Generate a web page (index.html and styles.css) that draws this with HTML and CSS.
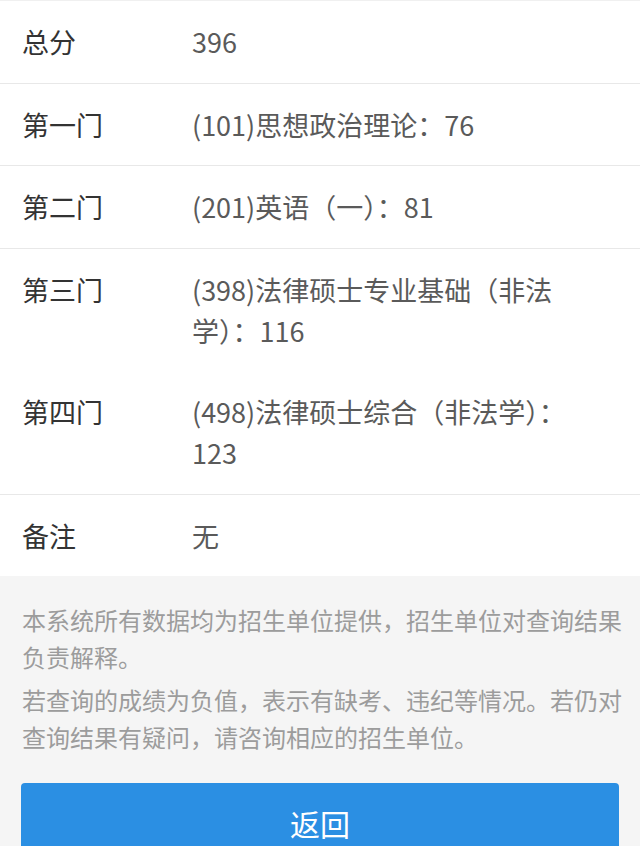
FILE: index.html
```html
<!DOCTYPE html>
<html lang="zh-CN">
<head>
    <meta charset="UTF-8">
    <meta name="viewport" content="width=device-width, initial-scale=1.0">
    <title>成绩查询结果</title>
    <link rel="stylesheet" href="styles.css">
</head>
<body>
    <div class="score-list">
        <div class="score-row">
            <div class="score-label">总分</div>
            <div class="score-value">396</div>
        </div>
        <div class="score-row">
            <div class="score-label">第一门</div>
            <div class="score-value">(101)思想政治理论：76</div>
        </div>
        <div class="score-row">
            <div class="score-label">第二门</div>
            <div class="score-value">(201)英语（一）：81</div>
        </div>
        <div class="score-row no-line">
            <div class="score-label">第三门</div>
            <div class="score-value">(398)法律硕士专业基础（非法学）：116</div>
        </div>
        <div class="score-row">
            <div class="score-label">第四门</div>
            <div class="score-value">(498)法律硕士综合（非法学）：123</div>
        </div>
        <div class="score-row no-line">
            <div class="score-label">备注</div>
            <div class="score-value">无</div>
        </div>
    </div>

    <div class="notice">
        <p>本系统所有数据均为招生单位提供，招生单位对查询结果负责解释。</p>
        <p>若查询的成绩为负值，表示有缺考、违纪等情况。若仍对查询结果有疑问，请咨询相应的招生单位。</p>
        <button class="back-btn">返回</button>
    </div>
</body>
</html>
```

FILE: styles.css
```css
body {
    font-family: "Noto Sans CJK SC", "Noto Sans", sans-serif;
    background-color: #f5f5f5;
    margin: 0;
    padding: 0;
}
.score-list {
    background: #fff;
    border-top: 1px solid #f0f0f0;
}
.score-row {
    display: flex;
    padding: 20.25px 0;
    border-bottom: 1px solid #e8e8e8;
    font-size: 27px;
    line-height: 41px;
}
.score-row.no-line {
    border-bottom: none;
}
.score-label {
    width: 192px;
    flex-shrink: 0;
    padding-left: 22px;
    box-sizing: border-box;
    color: #333;
}
.score-value {
    flex: 1;
    padding-right: 42px;
    color: #5a5a5a;
}
.notice {
    padding: 25px 16px 0 21px;
}
.notice p {
    margin: 0 0 6px 1px;
    font-size: 24px;
    line-height: 37px;
    color: #9c9c9c;
}
.back-btn {
    display: block;
    width: 598px;
    height: 80px;
    margin-top: 28px;
    border: none;
    border-radius: 4px;
    background-color: #2b8fe3;
    color: #fff;
    font-family: inherit;
    font-size: 30px;
}
```
